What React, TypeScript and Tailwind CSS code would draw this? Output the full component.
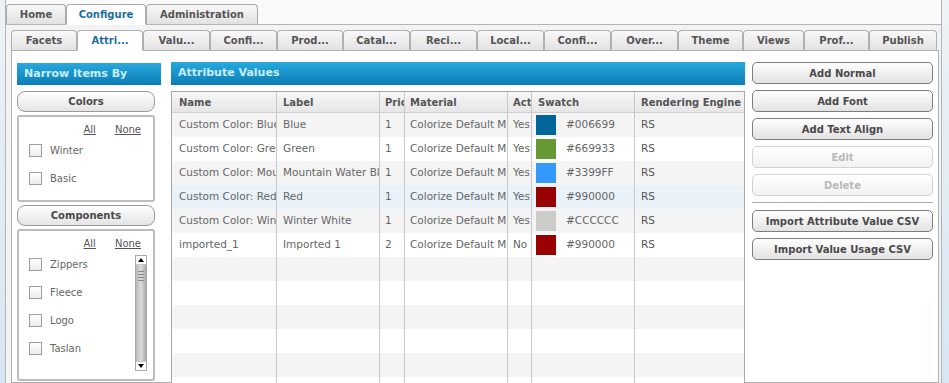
import React from 'react';

const topTabs = [
  { label: 'Home', w: 'w-[60px]' },
  { label: 'Configure', w: 'w-[80px]', active: true },
  { label: 'Administration', w: 'w-[112px]' },
];

const subTabs = [
  { label: 'Facets', w: 'w-[66px]' },
  { label: 'Attri...', w: 'w-[66px]', active: true },
  { label: 'Valu...', w: 'w-[67px]' },
  { label: 'Confi...', w: 'w-[67px]' },
  { label: 'Prod...', w: 'w-[66px]' },
  { label: 'Catal...', w: 'w-[67px]' },
  { label: 'Reci...', w: 'w-[67px]' },
  { label: 'Local...', w: 'w-[67px]' },
  { label: 'Confi...', w: 'w-[67px]' },
  { label: 'Over...', w: 'w-[67px]' },
  { label: 'Theme', w: 'w-[65px]' },
  { label: 'Views', w: 'w-[61px]' },
  { label: 'Prof...', w: 'w-[65px]' },
  { label: 'Publish', w: 'w-[68px]' },
];

const rows = [
  { name: 'Custom Color: Blue', label: 'Blue', pri: '1', mat: 'Colorize Default Material', act: 'Yes', color: '#006699' },
  { name: 'Custom Color: Green', label: 'Green', pri: '1', mat: 'Colorize Default Material', act: 'Yes', color: '#669933' },
  { name: 'Custom Color: Mountain Water Blue', label: 'Mountain Water Blue', pri: '1', mat: 'Colorize Default Material', act: 'Yes', color: '#3399FF' },
  { name: 'Custom Color: Red', label: 'Red', pri: '1', mat: 'Colorize Default Material', act: 'Yes', color: '#990000', selected: true },
  { name: 'Custom Color: Winter White', label: 'Winter White', pri: '1', mat: 'Colorize Default Material', act: 'Yes', color: '#CCCCCC' },
  { name: 'imported_1', label: 'Imported 1', pri: '2', mat: 'Colorize Default Material', act: 'No', color: '#990000' },
];

const cols = ['w-[105px]', 'w-[103px]', 'w-[25px]', 'w-[103px]', 'w-[24px]', 'w-[103px]', 'flex-1'];
const headers = ['Name', 'Label', 'Priority', 'Material', 'Active', 'Swatch', 'Rendering Engine'];

function Cell({ i, children, pl = 'pl-[6px]' }: { i: number; children?: React.ReactNode; pl?: string }) {
  return (
    <div className={`${cols[i]} ${pl} shrink-0 h-full flex items-center overflow-hidden whitespace-nowrap ${i < 6 ? 'border-r border-[#c9c9c9]' : ''}`}>
      {children}
    </div>
  );
}

function PillButton({ children }: { children: React.ReactNode }) {
  return (
    <div className="h-[21px] w-[138px] shrink-0 rounded-[8px] border border-[#9a9a9a] bg-gradient-to-b from-white to-[#e4e4e4] flex items-center justify-center font-bold text-[10px] text-[#4a4a4a]">
      {children}
    </div>
  );
}

function ActionButton({ children, disabled }: { children: React.ReactNode; disabled?: boolean }) {
  return (
    <div
      className={`h-[22px] w-[181px] shrink-0 rounded-[5px] border flex items-center justify-center font-bold text-[10px] ${
        disabled
          ? 'border-[#d2d2d2] bg-gradient-to-b from-white to-[#f2f2f2] text-[#b9b9b9]'
          : 'border-[#7d7d7d] bg-gradient-to-b from-white to-[#e2e2e2] text-[#4a4a4a]'
      }`}
    >
      {children}
    </div>
  );
}

function CheckItem({ label }: { label: string }) {
  return (
    <div className="h-[28px] flex items-center pl-[10px] gap-[8px] text-[10px] text-[#666]">
      <div className="w-[13px] h-[13px] border border-[#9d9d9d] bg-gradient-to-b from-white to-[#ececec]" />
      <span>{label}</span>
    </div>
  );
}

function AllNone() {
  return (
    <div className="h-[14px] flex justify-end items-center gap-[19px] pr-[12px] text-[10px] text-[#555]">
      <span className="underline">All</span>
      <span className="underline">None</span>
    </div>
  );
}

function Scrollbar() {
  return (
    <div className="w-[12px] h-[116px] mt-[5px] border border-[#a8a8a8] bg-white flex flex-col">
      <div className="h-[9px] flex items-center justify-center border-b border-[#c8c8c8]">
        <div className="w-0 h-0 border-l-[3px] border-r-[3px] border-b-[4px] border-l-transparent border-r-transparent border-b-black" />
      </div>
      <div className="flex-1 bg-gradient-to-r from-[#b9b9b9] via-[#dcdcdc] to-[#a9a9a9] flex flex-col items-center pt-[6px] gap-[2px]">
        <div className="w-[6px] h-px bg-[#888]" />
        <div className="w-[6px] h-px bg-[#888]" />
        <div className="w-[6px] h-px bg-[#888]" />
        <div className="w-[6px] h-px bg-[#888]" />
      </div>
      <div className="h-[9px] flex items-center justify-center border-t border-[#c8c8c8]">
        <div className="w-0 h-0 border-l-[3px] border-r-[3px] border-t-[4px] border-l-transparent border-r-transparent border-t-black" />
      </div>
    </div>
  );
}

export default function App() {
  const emptyRows = Array.from({ length: 6 });

  return (
    <div
      className="w-[949px] h-[383px] overflow-hidden flex bg-gradient-to-b from-[#eef2f5] to-[#d6e6f2]"
      style={{ fontFamily: '"DejaVu Sans", Verdana, sans-serif' }}
    >
      <div className="w-[5px] shrink-0" />
      {/* Main frame */}
      <div className="w-[937px] shrink-0 h-full border-l border-r border-[#b4b4b4] bg-[#f3f3f3] flex flex-col overflow-hidden">
        {/* Top tabs */}
        <div className="h-[25px] shrink-0 flex items-end bg-[#fafafa] border-b border-[#b4b4b4]">
          {topTabs.map((t) => (
            <div
              key={t.label}
              className={`${t.w} flex items-center justify-center font-bold text-[10px] rounded-t-[4px] border border-[#ababab] ${
                t.active
                  ? 'h-[21px] bg-white text-[#1d6e9e] border-b-white -mb-px'
                  : 'h-[20px] bg-gradient-to-b from-[#f8f8f8] to-[#e1e1e1] text-[#555] border-b-0'
              }`}
            >
              {t.label}
            </div>
          ))}
        </div>

        {/* Sub tabs */}
        <div className="pl-[5px] pt-[5px] flex-1 min-h-0 flex flex-col">
          <div className="h-[20px] shrink-0 flex items-end">
            {subTabs.map((t, i) => (
              <div
                key={i}
                className={`${t.w} flex items-center justify-center font-bold text-[10px] rounded-t-[4px] border border-[#b0b0b0] ${
                  t.active
                    ? 'h-[21px] bg-white text-[#1d6e9e] border-b-white -mb-px relative'
                    : 'h-[20px] bg-gradient-to-b from-[#f9f9f9] to-[#e2e2e2] text-[#555] border-b-0'
                }`}
              >
                {t.label}
              </div>
            ))}
          </div>

          {/* Content */}
          <div className="w-[928px] flex-1 min-h-0 border border-[#b0b0b0] bg-white flex items-start pl-[5px] pt-[11px]">
            {/* Left */}
            <div className="w-[144px] shrink-0 flex flex-col">
              <div className="h-[22px] shrink-0 mt-px bg-gradient-to-b from-[#27a9de] to-[#0b7db5] flex items-center pl-[7px] font-bold text-[11px] text-[#c8eeff]">
                Narrow Items By
              </div>
              <div className="mt-[6px]">
                <PillButton>Colors</PillButton>
              </div>
              <div className="mt-[3px] w-[138px] h-[87px] shrink-0 border-2 border-[#bcbcbc] rounded-[3px] pt-[5px]">
                <AllNone />
                <CheckItem label="Winter" />
                <CheckItem label="Basic" />
              </div>
              <div className="mt-[3px]">
                <PillButton>Components</PillButton>
              </div>
              <div className="mt-[3px] w-[138px] h-[152px] shrink-0 border-2 border-[#bcbcbc] rounded-[3px] pt-[5px] overflow-hidden">
                <AllNone />
                <div className="flex">
                  <div className="w-[116px]">
                    <CheckItem label="Zippers" />
                    <CheckItem label="Fleece" />
                    <CheckItem label="Logo" />
                    <CheckItem label="Taslan" />
                  </div>
                  <Scrollbar />
                </div>
              </div>
            </div>

            {/* Middle */}
            <div className="w-[574px] shrink-0 ml-[10px] flex flex-col">
              <div className="h-[23px] shrink-0 bg-gradient-to-b from-[#27a9de] to-[#0b7db5] flex items-center pl-[7px] font-bold text-[11px] text-[#c8eeff]">
                Attribute Values
              </div>
              <div className="mt-[6px] border border-[#a9a9a9] border-b-0 flex flex-col text-[10.5px] text-[#666]">
                <div className="h-[21px] shrink-0 flex bg-gradient-to-b from-[#f6f6f6] to-[#e6e6e6] border-b border-[#cfcfcf] font-bold text-[10px] text-[#555]">
                  {headers.map((h, i) => (
                    <Cell key={h} i={i} pl={i === 0 ? 'pl-[7px]' : i === 2 || i === 3 || i === 4 ? 'pl-[5px]' : 'pl-[6px]'}>
                      {h}
                    </Cell>
                  ))}
                </div>
                {rows.map((r, idx) => (
                  <div
                    key={r.name}
                    className={`h-[24px] shrink-0 flex ${r.selected ? 'bg-[#e9f2f9]' : idx % 2 === 0 ? 'bg-[#f4f4f4]' : 'bg-white'}`}
                  >
                    <Cell i={0} pl="pl-[7px]">{r.name}</Cell>
                    <Cell i={1}>{r.label}</Cell>
                    <Cell i={2} pl="pl-[5px]">{r.pri}</Cell>
                    <Cell i={3} pl="pl-[5px]">{r.mat}</Cell>
                    <Cell i={4} pl="pl-[5px]">{r.act}</Cell>
                    <Cell i={5} pl="pl-[4px]">
                      <div className="w-[20px] h-[20px] shrink-0" style={{ backgroundColor: r.color }} />
                      <span className="ml-[10px]">{r.color}</span>
                    </Cell>
                    <Cell i={6}>
                      <span className="text-[#555]">RS</span>
                    </Cell>
                  </div>
                ))}
                {emptyRows.map((_, idx) => (
                  <div key={idx} className={`h-[24px] shrink-0 flex ${idx % 2 === 0 ? 'bg-[#f4f4f4]' : 'bg-white'}`}>
                    {cols.map((_, i) => (
                      <Cell key={i} i={i} />
                    ))}
                  </div>
                ))}
              </div>
            </div>

            {/* Right */}
            <div className="ml-[7px] w-[181px] shrink-0 flex flex-col gap-[6px]">
              <ActionButton>Add Normal</ActionButton>
              <ActionButton>Add Font</ActionButton>
              <ActionButton>Add Text Align</ActionButton>
              <ActionButton disabled>Edit</ActionButton>
              <ActionButton disabled>Delete</ActionButton>
              <div className="h-px shrink-0 bg-[#a9a9a9] mb-px" />
              <ActionButton>Import Attribute Value CSV</ActionButton>
              <ActionButton>Import Value Usage CSV</ActionButton>
            </div>
          </div>
        </div>
      </div>
    </div>
  );
}
